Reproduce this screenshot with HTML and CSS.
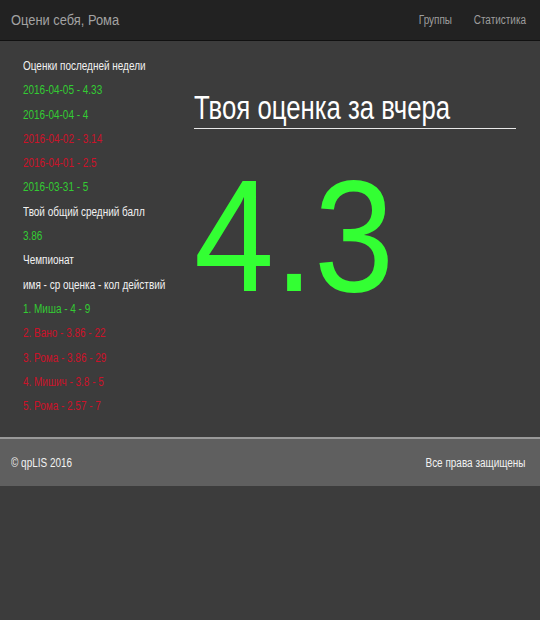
FILE: index.html
```html
<!DOCTYPE html>
<html lang="ru">
<head>
<meta charset="utf-8">
<title>Оцени себя</title>
<link rel="stylesheet" href="styles.css">
</head>
<body>
<header class="navbar">
  <a class="brand"><span class="nar">Оцени себя, Рома</span></a>
  <nav class="nav">
    <a><span class="nar-r">Группы</span></a>
    <a><span class="nar-r">Статистика</span></a>
  </nav>
</header>
<main class="content">
  <aside class="side">
    <div class="row white"><span class="nar">Оценки последней недели</span></div>
    <div class="row good"><span class="nar">2016-04-05 - 4.33</span></div>
    <div class="row good"><span class="nar">2016-04-04 - 4</span></div>
    <div class="row bad"><span class="nar">2016-04-02 - 3.14</span></div>
    <div class="row bad"><span class="nar">2016-04-01 - 2.5</span></div>
    <div class="row good"><span class="nar">2016-03-31 - 5</span></div>
    <div class="row white"><span class="nar">Твой общий средний балл</span></div>
    <div class="row good"><span class="nar">3.86</span></div>
    <div class="row white"><span class="nar">Чемпионат</span></div>
    <div class="row white"><span class="nar">имя - ср оценка - кол действий</span></div>
    <div class="row good"><span class="nar">1. Миша - 4 - 9</span></div>
    <div class="row bad"><span class="nar">2. Вано - 3.86 - 22</span></div>
    <div class="row bad"><span class="nar">3. Рома - 3.86 - 29</span></div>
    <div class="row bad"><span class="nar">4. Мишич - 3.8 - 5</span></div>
    <div class="row bad"><span class="nar">5. Рома - 2.57 - 7</span></div>
  </aside>
  <section class="main">
    <h1 class="title"><span class="nar title-text">Твоя оценка за вчера</span></h1>
    <div class="score"><span class="nar score-text">4.3</span></div>
  </section>
</main>
<footer class="footer">
  <span class="nar">© qpLIS 2016</span>
  <span class="nar-r">Все права защищены</span>
</footer>
</body>
</html>
```
FILE: styles.css
```css
* { box-sizing: border-box; }
html, body {
  margin: 0;
  padding: 0;
  background: #3c3c3c;
  font-family: "Liberation Sans", Arial, sans-serif;
  color: #fff;
}
.nar {
  display: inline-block;
  white-space: nowrap;
  transform: scaleX(0.83);
  transform-origin: left center;
}
.nar-r {
  display: inline-block;
  white-space: nowrap;
  transform: scaleX(0.83);
  transform-origin: right center;
}
.navbar {
  height: 41px;
  background: #222;
  border-bottom: 1px solid #111;
  display: flex;
  align-items: center;
  justify-content: space-between;
  padding: 0 14px 0 11px;
}
.brand {
  color: #a3a3a3;
  font-size: 15.5px;
}
.nav {
  display: flex;
  gap: 11px;
}
.nav a {
  color: #9d9d9d;
  font-size: 12px;
}
.content {
  display: flex;
  padding: 0 24px 0 23px;
  height: 396px;
}
.side {
  width: 171px;
  flex: none;
  padding-top: 13px;
  display: flex;
  flex-direction: column;
}
.row {
  font-size: 12px;
  line-height: 24.3px;
  white-space: nowrap;
}
.white { color: #f2f2f2; }
.good { color: #3c3; }
.bad { color: #cc1229; }
.main {
  flex: 1;
  min-width: 0;
  padding-top: 48px;
}
.title {
  margin: 0;
  font-weight: normal;
  font-size: 33px;
  line-height: 37px;
  padding-bottom: 2px;
  border-bottom: 1px solid #e8e8e8;
  color: #fff;
  white-space: nowrap;
}
.title-text {
  transform: scaleX(0.78);
}
.score {
  color: #3f3;
  font-size: 160px;
  line-height: 160px;
  margin-top: 27px;
  white-space: nowrap;
}
.score-text {
  transform: scaleX(0.9);
}
.footer {
  height: 49px;
  background: #5f5f5f;
  border-top: 2px solid #999;
  display: flex;
  align-items: center;
  justify-content: space-between;
  padding: 0 14px 0 11px;
  font-size: 12px;
  color: #f2f2f2;
}
```
